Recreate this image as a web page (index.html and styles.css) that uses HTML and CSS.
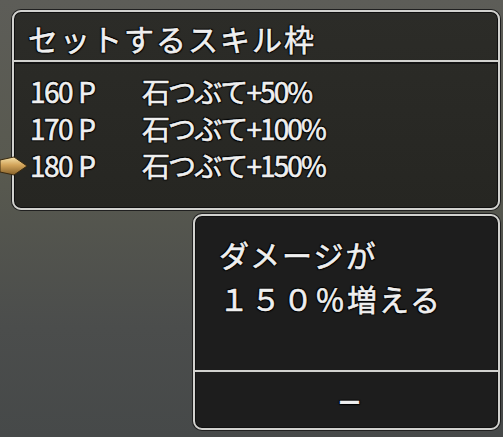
FILE: index.html
```html
<!DOCTYPE html>
<html lang="ja">
<head>
<meta charset="utf-8">
<link rel="stylesheet" href="styles.css">
</head>
<body>
<div class="screen">
  <section class="window skills">
    <header class="win-title">セットするスキル枠</header>
    <ul class="skill-list">
      <li class="skill"><span class="cost">160<span class="unit">P</span></span><span class="name">石つぶて+50%</span></li>
      <li class="skill"><span class="cost">170<span class="unit">P</span></span><span class="name">石つぶて+100%</span></li>
      <li class="skill selected">
        <svg class="cursor" viewBox="0 0 28 20" width="28" height="20">
          <defs>
            <linearGradient id="gold" x1="0" y1="0" x2="0" y2="1">
              <stop offset="0" stop-color="#f6e2aa"/>
              <stop offset="0.45" stop-color="#d2a45a"/>
              <stop offset="1" stop-color="#86612a"/>
            </linearGradient>
          </defs>
          <polygon points="0,4 14,1 27,10 14,19 0,16" fill="url(#gold)" stroke="#3a2a10" stroke-width="1"/>
        </svg>
        <span class="cost">180<span class="unit">P</span></span><span class="name">石つぶて+150%</span>
      </li>
    </ul>
  </section>
  <section class="window detail">
    <div class="desc">ダメージが<br>１５０％増える</div>
    <div class="foot">－</div>
  </section>
</div>
</body>
</html>
```
FILE: styles.css
```css
html, body {
  margin: 0;
  padding: 0;
}
body {
  width: 503px;
  height: 437px;
  overflow: hidden;
  background: linear-gradient(180deg, #5d5d58 0%, #58594f 40%, #4b4d4c 75%, #464949 100%);
  font-family: "Noto Sans CJK JP", "Noto Sans", sans-serif;
  color: #efefef;
}
.screen {
  display: flex;
  flex-direction: column;
  padding-top: 10px;
}
.window {
  box-sizing: border-box;
  border: 2px solid #d2d2cf;
  border-radius: 9px;
  box-shadow: 0 0 0 1px #202020, inset 0 0 0 1px #101010;
  text-shadow: 0 0 2px #000, 1px 1px 1px #000, -1px -1px 1px #000, 1px -1px 1px #000, -1px 1px 1px #000;
  -webkit-text-stroke: 0.6px #efefef;
}
.skills {
  margin-left: 12px;
  width: 488px;
  height: 200px;
  background: linear-gradient(180deg, #2c2c28 0%, #262622 100%);
  display: flex;
  flex-direction: column;
}
.win-title {
  height: 50px;
  box-sizing: border-box;
  padding-left: 14px;
  padding-top: 6px;
  font-size: 30px;
  line-height: 40px;
  letter-spacing: 2px;
  border-bottom: 2px solid #d2d2cf;
  box-shadow: 0 2px 0 #141414;
}
.skill-list {
  list-style: none;
  margin: 0;
  padding: 11px 0 0 16px;
}
.skill {
  position: relative;
  display: flex;
  align-items: center;
  height: 37px;
  font-size: 28px;
  line-height: 37px;
}
.cost {
  width: 112px;
  letter-spacing: -1.5px;
}
.unit {
  margin-left: 6px;
}
.name {
  letter-spacing: -1.9px;
}
.cursor {
  position: absolute;
  left: -30px;
  top: 9px;
}
.detail {
  margin-top: 4px;
  margin-left: 193px;
  width: 307px;
  height: 216px;
  background: #1d1d1d;
  display: flex;
  flex-direction: column;
}
.desc {
  height: 156px;
  box-sizing: border-box;
  padding: 16px 0 0 24px;
  font-size: 30px;
  line-height: 44px;
  letter-spacing: 2px;
  border-bottom: 2px solid #d2d2cf;
}
.foot {
  flex: 1;
  display: flex;
  align-items: center;
  justify-content: center;
  font-size: 26px;
  font-weight: 700;
  padding-left: 6px;
}
```
